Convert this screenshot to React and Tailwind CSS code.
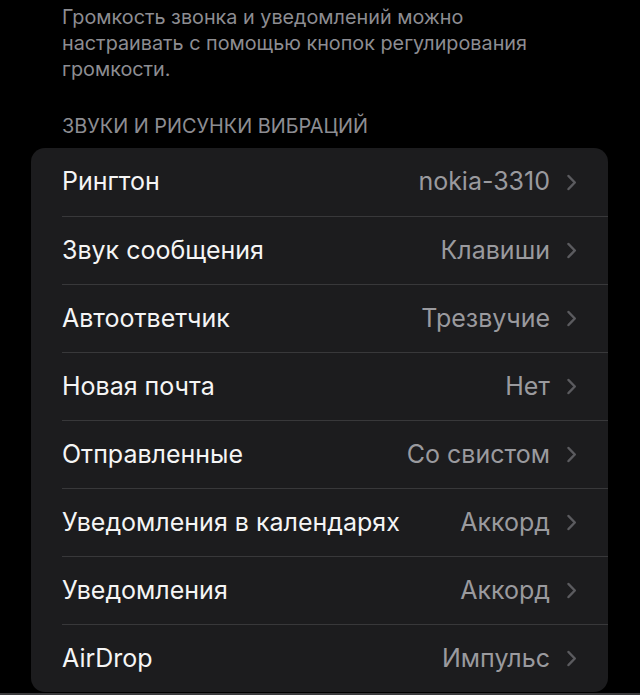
const rows = [
  { label: 'Рингтон', value: 'nokia-3310' },
  { label: 'Звук сообщения', value: 'Клавиши' },
  { label: 'Автоответчик', value: 'Трезвучие' },
  { label: 'Новая почта', value: 'Нет' },
  { label: 'Отправленные', value: 'Со свистом' },
  { label: 'Уведомления в календарях', value: 'Аккорд' },
  { label: 'Уведомления', value: 'Аккорд' },
  { label: 'AirDrop', value: 'Импульс' },
]

function Chevron() {
  return (
    <svg width="11" height="17" viewBox="0 0 11 17" className="shrink-0">
      <path d="M2.5 2 L8.8 8.5 L2.5 15" fill="none" stroke="#5b5b5f" strokeWidth="2.5" strokeLinecap="round" strokeLinejoin="round" />
    </svg>
  )
}

export default function App() {
  return (
    <div className="w-[640px] h-[695px] bg-black overflow-hidden font-['Inter','Roboto',sans-serif]">
      <p className="pl-[62px] pr-[40px] pt-[4px] text-[19.8px] leading-[26px] text-[#8d8d92]">
        Громкость звонка и уведомлений можно<br />
        настраивать с помощью кнопок регулирования<br />
        громкости.
      </p>

      <p className="px-[62px] mt-[32px] text-[19.9px] leading-[24px] text-[#8d8d92]">
        ЗВУКИ И РИСУНКИ ВИБРАЦИЙ
      </p>

      <div className="mx-[31px] mt-[10px] w-[577px] bg-[#1c1c1e] rounded-[14px] overflow-hidden">
        {rows.map((r, i) => (
          <div key={i} className="pl-[31px]">
            <div className={`h-[68px] flex items-center pr-[31px] ${i > 0 ? 'border-t border-[#38383a]' : ''}`}>
              <span className="flex-1 text-[25px] text-[#f5f5f5] truncate">{r.label}</span>
              <span className="text-[25px] text-[#9a9a9e] mr-[16px]">{r.value}</span>
              <Chevron />
            </div>
          </div>
        ))}
      </div>
      <div className="mt-[1px] h-[2px] bg-[#3a3a3c]" />
    </div>
  )
}
